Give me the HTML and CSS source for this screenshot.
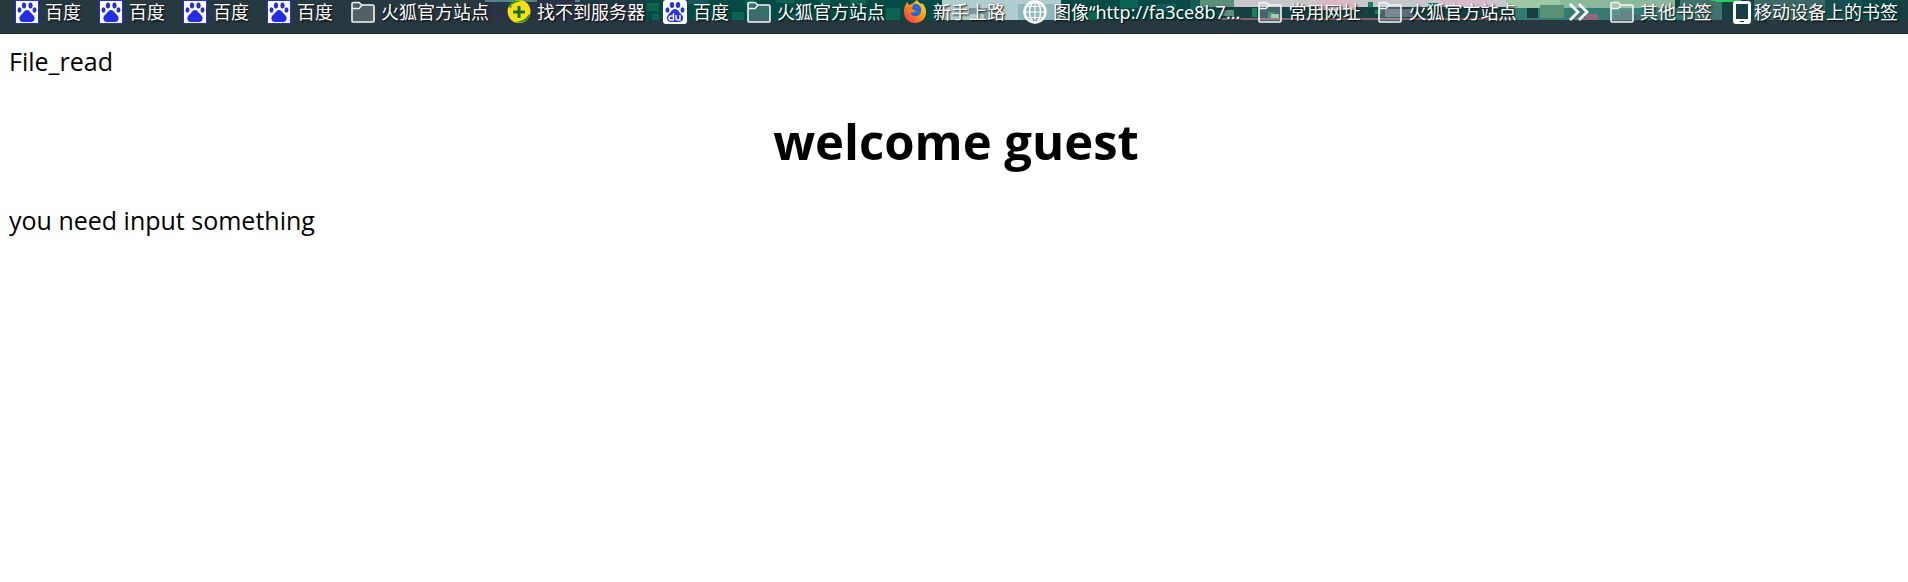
FILE: index.html
```html
<!DOCTYPE html>
<html lang="zh-CN">
<head>
<meta charset="utf-8">
<title>File_read</title>
<link rel="stylesheet" href="styles.css">
</head>
<body>
<svg class="symbols" aria-hidden="true">
  <symbol id="paw" viewBox="0 0 24 24"><path fill="#252de0" d="M0 0h24v24H0z"/><path fill="#fff" d="M1 1h22v22H1z"/><g fill="#252de0"><ellipse cx="9" cy="5.500" rx="2.100" ry="3"/><ellipse cx="15.500" cy="5.500" rx="2.100" ry="3"/><ellipse cx="4.500" cy="10" rx="2" ry="2.700"/><ellipse cx="19.500" cy="10" rx="2" ry="2.700"/><path d="M12 10c2 0 3 2 5.500 4.500C21 17 20 22 16 22H8c-4 0-5-5-1.500-7.500C9 12 10 10 12 10z"/></g></symbol>
  <symbol id="folder" viewBox="0 0 24 24"><path d="M1 21V4q0-1.500 1.500-1.500H8L11 5h10.500Q23 5 23 6.500V21q0 1-1 1H2q-1 0-1-1zM1 10q0-1.500 1.500-1.500H8L11 5" fill="#fff" fill-opacity=".2" stroke="#f5f5f5" stroke-width="1.600"/></symbol>
</svg>
<nav class="bookmarks" aria-label="书签">
  <svg class="theme" viewBox="0 0 1908 20" preserveAspectRatio="none" aria-hidden="true" shape-rendering="crispEdges">
    <path fill="#2a3344" d="M485 0h160v20H485z"/><path fill="#4f858a" d="M485 0h52v2h-52zM575 0h5v2h-5z"/>
    <path fill="#1d3a3e" d="M582 0h63v4h-63z"/>
    <path fill="#064a46" d="M645 0h297v20H645zM1061 0h250v20h-250z"/>
    <path fill="#0b6452" d="M647 3h12v8h-12zM652 14h7v6h-7zM732 12h12v8h-12zM745 0h10v5h-10zM776 0h18v3h-18zM820 0h10v4h-10zM850 0h16v5h-16zM886 8h14v12h-14zM868 14h10v6h-10zM1080 10h18v10h-18zM1120 0h18v8h-18z"/>
    <path fill="#145a5b" d="M688 0h20v4h-20zM790 14h24v6h-24zM1150 4h26v8h-26zM1190 0h22v10h-22z"/>
    <path fill="#b2cdcd" d="M942 0h119v20H942z"/><path fill="#8fb8ba" d="M1018 4h43v16h-43z"/><path fill="#7c989d" d="M969 8h28v6h-28zM984 14h20v6h-20z"/>
    <path fill="#183f42" d="M1220 0h688v20h-688z"/><path fill="#c7c6c9" d="M1234 0h280v7h-280z"/>
    <path fill="#5c8e7c" d="M1200 0h34v7h-34zM1222 10h12v6h-12z"/><path fill="#d9b8c7" d="M1318 0h36v10h-36zM1440 0h50v6h-50z"/>
    <path fill="#80626e" d="M1220 18h300v2h-300z"/><path fill="#5d6c77" d="M1385 9h28v8h-28z"/>
    <path fill="#178258" d="M1268 12h6v6h-6zM1368 2h5v5h-5zM1375 10h6v4h-6zM1428 3h10v4h-10zM1252 8h5v9h-5z"/><path fill="#91bf91" d="M1271 14h8v4h-8z"/>
    <path fill="#9ec9a5" d="M1506 0h54v8h-54z"/><path fill="#8cb99b" d="M1560 0h115v8h-115z"/>
    <path fill="#347c72" d="M1514 8h166v12h-166z"/><path fill="#183f42" d="M1527 8h11v10h-11z"/><path fill="#579276" d="M1540 5h24v13h-24z"/><path fill="#8c6878" d="M1586 14h12v6h-12zM1575 18h24v2h-24z"/><path fill="#42666a" d="M1620 10h14v10h-14zM1614 15h30v4h-30z"/>
    <path fill="#42726c" d="M1680 0h42v20h-42z"/><path fill="#183f42" d="M1722 0h12v14h-12z"/><path fill="#3c6865" d="M1754 0h71v20h-71z"/><path fill="#174f50" d="M1825 0h38v20h-38z"/><path fill="#064a46" d="M1863 0h35v20h-35z"/>
    <path fill="#29ca59" d="M1709 0h34q-5 2-17 2t-17-2z"/>
  </svg>
  <div class="group">
    <a class="bookmark" href="#"><svg class="icon"><use href="#paw"/></svg>百度</a>
    <a class="bookmark" href="#"><svg class="icon"><use href="#paw"/></svg>百度</a>
    <a class="bookmark" href="#"><svg class="icon"><use href="#paw"/></svg>百度</a>
    <a class="bookmark" href="#"><svg class="icon"><use href="#paw"/></svg>百度</a>
    <button class="bookmark"><svg class="icon"><use href="#folder"/></svg>火狐官方站点</button>
    <a class="bookmark" href="#"><svg class="icon" viewBox="0 0 24 24"><circle cx="12" cy="11.500" r="11.500" fill="#f9de18"/><path d="M1 8C3 2 8-1 15 1 8 2 4 4 3 8c2 0 2-1 1-2M23 14c-2 7-8 10-15 8 8-1 12-4 13-7" fill="#219414"/><path d="M12 6v12M6 12h12" stroke="#137322" stroke-width="3"/></svg>找不到服务器</a>
    <a class="bookmark" href="#"><svg class="icon" viewBox="0 0 24 24"><rect width="24" height="24" rx="3" fill="#fff"/><g fill="#2932dc"><ellipse cx="9" cy="5" rx="2.200" ry="3"/><ellipse cx="15" cy="5" rx="2.200" ry="3"/><ellipse cx="4.500" cy="10" rx="2" ry="2.700"/><ellipse cx="19.500" cy="10" rx="2" ry="2.700"/><path d="M12 9c3 0 4 3 6 5 4 3 2 8-2 8H8c-4 0-6-5-2-8 2-2 3-5 6-5z"/></g><path d="M10.500 13v7H8q-2 0-2-2t2-2h2.500M13 15v3q0 2 2 2h2v-5" fill="none" stroke="#fff" stroke-width="1.400"/></svg>百度</a>
    <button class="bookmark"><svg class="icon"><use href="#folder"/></svg>火狐官方站点</button>
    <a class="bookmark" href="#"><svg class="icon" viewBox="0 0 24 24"><defs><linearGradient id="fox" x1="1" y1="0" x2="0" y2="1"><stop offset="0" stop-color="#ffe52d"/><stop offset=".45" stop-color="#ff9b16"/><stop offset="1" stop-color="#f4265c"/></linearGradient></defs><path d="M2 6l2-4 2 3 3-1 5-4c1 2 3 3 4 4l1-1c3 3 4 6 4 9 0 7-5 11-11 11S1 19 1 12c0-2 0-4 1-6z" fill="url(#fox)"/><path d="M11 4c5-1 8 3 7 8-1 4-5 5-8 4-2-1-3-3-2-4 2 1 4 0 5-1-2-1-2-1-4-2 0-2 0-3 2-5z" fill="#2469d7"/><path d="M4 8c2-2 5-1 6-1L8 10l3 1c-1 2-3 2-5 2z" fill="#ff7b18"/></svg>新手上路</a>
    <a class="bookmark" href="#"><svg class="icon" viewBox="0 0 24 24" fill="none" stroke="#fff" stroke-width="1.500"><circle cx="12" cy="12" r="10.500" stroke-width="2.500"/><ellipse cx="12" cy="12" rx="5.500" ry="10"/><path d="M12 2v20M2 12h20M4 6.500h16M4 17.500h16" stroke-width="1.200"/></svg>图像“http://fa3ce8b7...</a>
    <button class="bookmark"><svg class="icon"><use href="#folder"/></svg>常用网址</button>
    <button class="bookmark"><svg class="icon"><use href="#folder"/></svg>火狐官方站点</button>
  </div>
  <div class="group group-end">
    <button class="bookmark" aria-label="更多书签"><svg class="icon more" viewBox="2 0 20 24"><path d="M3 4l8 8-8 8M12 4l8 8-8 8" fill="none" stroke="#fff" stroke-width="2.800"/></svg></button>
    <button class="bookmark"><svg class="icon"><use href="#folder"/></svg>其他书签</button>
    <button class="bookmark mobile"><svg class="icon phone" viewBox="0 0 18 24"><path fill="#fff" fill-rule="evenodd" d="M3 1h12q3 0 3 3v17q0 3-3 3H3q-3 0-3-3V4q0-3 3-3zm0 3v15h12V4zM7 21v1h4v-1z"/></svg>移动设备上的书签</button>
  </div>
</nav>
<main class="page">
  <div class="line">File_read</div>
  <h1 class="title">welcome guest</h1>
  <div class="line">you need input something</div>
</main>
</body>
</html>
```
FILE: styles.css
```css
body { margin: 0; background: #fff; color: #000; font-family: "Open Sans", "Noto Sans CJK SC", sans-serif; }
.symbols { display: none; }
.bookmarks { position: relative; display: flex; justify-content: space-between; height: 33px; padding: 0 10px 0 15px; background: #27383f; border-bottom: 1px solid #1b2430; font-family: "Noto Sans", "Noto Sans CJK SC", sans-serif; }
.theme { position: absolute; left: 0; top: 0; width: 100%; height: 20px; }
.group { position: relative; display: flex; gap: 18px; }
.group-end { gap: 21px; }
.bookmark { display: flex; gap: 6px; height: 24px; padding: 0; border: 0; background: none; font-family: inherit; font-size: 18px; line-height: 24px; color: #fff; text-decoration: none; text-shadow: 1px 1px 2px #000; white-space: nowrap; }
.icon { flex: none; width: 24px; height: 24px; }
.more { width: 20px; }
.phone { width: 18px; }
.mobile { gap: 3px; }
.page { padding: 9px 5px 9px 9px; }
.line { font-size: 25px; line-height: 36px; }
.title { margin: 28px 0 27px; font-size: 49px; line-height: 68px; text-align: center; }
```
